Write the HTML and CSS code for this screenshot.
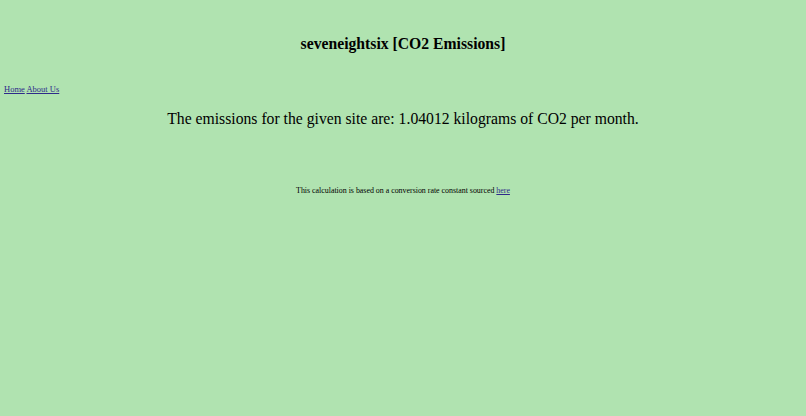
FILE: index.html
```html
<!DOCTYPE html>
<html>
<head>
<meta charset="utf-8">
<link rel="stylesheet" href="styles.css">
</head>
<body>
<h1 class="title">seveneightsix [CO2 Emissions]</h1>
<nav class="nav"><a href="#">Home</a> <a href="#">About Us</a></nav>
<p class="result">The emissions for the given site are: 1.04012 kilograms of CO2 per month.</p>
<p class="note">This calculation is based on a conversion rate constant sourced <a href="#">here</a></p>
</body>
</html>
```
FILE: styles.css
```css
html, body { margin: 0; padding: 0; }
body {
  background: #b0e3b0;
  font-family: "Liberation Serif", "Times New Roman", serif;
  color: #000;
  padding: 0 4px;
  height: 416px;
}
a { color: #2f2a8a; }
.title {
  margin: 0;
  padding-top: 34px;
  font-size: 15.7px;
  line-height: 20px;
  text-align: center;
  font-weight: bold;
}
.nav {
  margin-top: 30px;
  font-size: 8.5px;
  line-height: 10px;
}
.result {
  margin: 15px 0 0;
  text-align: center;
  font-size: 15.7px;
  line-height: 20px;
}
.note {
  margin: 57px 0 0;
  text-align: center;
  font-size: 7.9px;
  line-height: 10px;
}
```
